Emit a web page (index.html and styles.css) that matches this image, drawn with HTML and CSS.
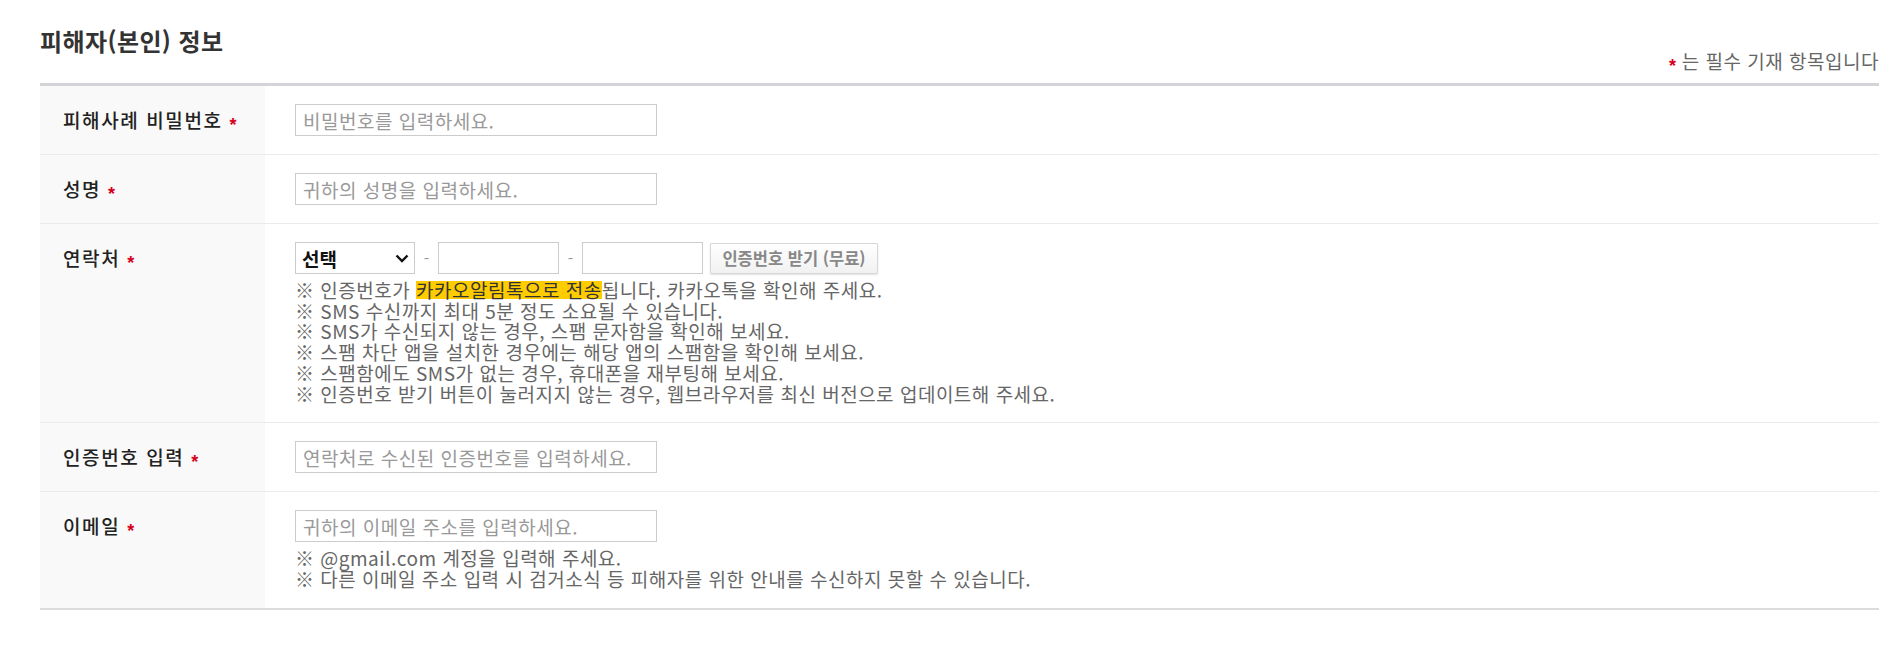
FILE: index.html
```html
<!DOCTYPE html>
<html lang="ko">
<head>
<meta charset="utf-8">
<title>피해자(본인) 정보</title>
<link rel="stylesheet" href="styles.css">
</head>
<body>
<div class="page">
  <div class="head">
    <h2 class="title">피해자(본인) 정보</h2>
    <p class="req"><span class="star">*</span> 는 필수 기재 항목입니다</p>
  </div>
  <div class="form">
    <div class="row">
      <div class="label">피해사례 비밀번호 <span class="star">*</span></div>
      <div class="field"><input class="txt" type="password" placeholder="비밀번호를 입력하세요."></div>
    </div>
    <div class="row">
      <div class="label">성명 <span class="star">*</span></div>
      <div class="field"><input class="txt" type="text" placeholder="귀하의 성명을 입력하세요."></div>
    </div>
    <div class="row">
      <div class="label">연락처 <span class="star">*</span></div>
      <div class="field">
        <div class="phone">
          <div class="selwrap">
            <select class="sel"><option>선택</option><option>010</option><option>011</option></select>
            <svg class="chev" width="14" height="9" viewBox="0 0 14 9"><path d="M1.5 1.5 L7 7 L12.5 1.5" fill="none" stroke="#111" stroke-width="2.4"/></svg>
          </div>
          <span class="dash">-</span>
          <input class="txt short" type="text">
          <span class="dash">-</span>
          <input class="txt short" type="text">
          <button class="btn" type="button">인증번호 받기 (무료)</button>
        </div>
        <ul class="notes">
          <li>※ 인증번호가 <mark class="hl">카카오알림톡으로 전송</mark>됩니다. 카카오톡을 확인해 주세요.</li>
          <li>※ SMS 수신까지 최대 5분 정도 소요될 수 있습니다.</li>
          <li>※ SMS가 수신되지 않는 경우, 스팸 문자함을 확인해 보세요.</li>
          <li>※ 스팸 차단 앱을 설치한 경우에는 해당 앱의 스팸함을 확인해 보세요.</li>
          <li>※ 스팸함에도 SMS가 없는 경우, 휴대폰을 재부팅해 보세요.</li>
          <li>※ 인증번호 받기 버튼이 눌러지지 않는 경우, 웹브라우저를 최신 버전으로 업데이트해 주세요.</li>
        </ul>
      </div>
    </div>
    <div class="row">
      <div class="label">인증번호 입력 <span class="star">*</span></div>
      <div class="field"><input class="txt" type="text" placeholder="연락처로 수신된 인증번호를 입력하세요."></div>
    </div>
    <div class="row last">
      <div class="label">이메일 <span class="star">*</span></div>
      <div class="field">
        <input class="txt" type="text" placeholder="귀하의 이메일 주소를 입력하세요.">
        <ul class="notes">
          <li>※ @gmail.com 계정을 입력해 주세요.</li>
          <li>※ 다른 이메일 주소 입력 시 검거소식 등 피해자를 위한 안내를 수신하지 못할 수 있습니다.</li>
        </ul>
      </div>
    </div>
  </div>
</div>
</body>
</html>
```

FILE: styles.css
```css
* { box-sizing: border-box; }
html, body { margin: 0; padding: 0; background: #fff; }
body {
  font-family: "Noto Sans CJK KR", "Noto Sans", sans-serif;
  color: #333;
}
.page {
  padding: 25px 23px 0 40px;
}
.head {
  height: 58px;
  display: flex;
  justify-content: space-between;
  align-items: flex-start;
}
.title {
  margin: 0;
  font-size: 24px;
  line-height: 32px;
  font-weight: 700;
  color: #333;
  letter-spacing: 0.4px;
}
.req {
  margin: 0 0 8px;
  align-self: flex-end;
  font-size: 19px;
  line-height: 20px;
  letter-spacing: 0.5px;
  color: #666;
}
.star {
  color: #d6001c;
  font-family: "Liberation Sans", sans-serif;
  font-weight: 700;
  font-size: 18px;
  letter-spacing: 0;
  vertical-align: -3px;
  line-height: 1;
}
.form {
  border-top: 3px solid #d3d3d8;
  border-bottom: 2px solid #dcdcdc;
}
.row {
  display: flex;
  border-bottom: 1px solid #ebebeb;
}
.row.last { border-bottom: 0; }
.label {
  width: 225px;
  flex: none;
  background: #f9f9f9;
  padding: 18px 0 0 23px;
  font-size: 19px;
  line-height: 32px;
  letter-spacing: 1.6px;
  font-weight: 500;
  color: #222;
}
.field {
  flex: 1;
  padding: 18px 0 18px 30px;
}
.txt {
  display: block;
  width: 362px;
  height: 32px;
  border: 1px solid #cccccc;
  padding: 0 7px;
  font-family: inherit;
  font-size: 19px;
  letter-spacing: 0.5px;
  color: #333;
  background: #fff;
  outline: none;
}
.txt::placeholder { color: #999; }
.phone {
  display: flex;
  align-items: center;
}
.selwrap {
  position: relative;
  width: 120px;
  height: 32px;
}
.sel {
  appearance: none;
  -webkit-appearance: none;
  width: 100%;
  height: 100%;
  border: 1px solid #cccccc;
  background: #fff;
  padding: 0 0 0 6px;
  font-family: inherit;
  font-size: 19px;
  font-weight: 700;
  color: #111;
  border-radius: 0;
}
.chev {
  position: absolute;
  right: 6px;
  top: 12px;
  pointer-events: none;
}
.dash {
  color: #999;
  font-size: 16px;
  width: 23px;
  text-align: center;
}
.txt.short { width: 121px; }
.btn {
  margin-left: 7px;
  height: 31px;
  width: 168px;
  padding: 0;
  border: 1px solid #d8d8d8;
  background: linear-gradient(#ffffff, #f1f1f1);
  box-shadow: 0 1px 2px rgba(0,0,0,0.12);
  font-family: inherit;
  font-size: 16.5px;
  font-weight: 700;
  color: #888;
  border-radius: 1px;
}
.notes {
  list-style: none;
  margin: 6px 0 0;
  padding: 0;
  font-size: 19px;
  line-height: 20.7px;
  letter-spacing: 0.5px;
  color: #666;
}
.hl {
  display: inline-block;
  background: #ffcc00;
  color: #333;
  line-height: 18px;
  height: 18px;
}
```
